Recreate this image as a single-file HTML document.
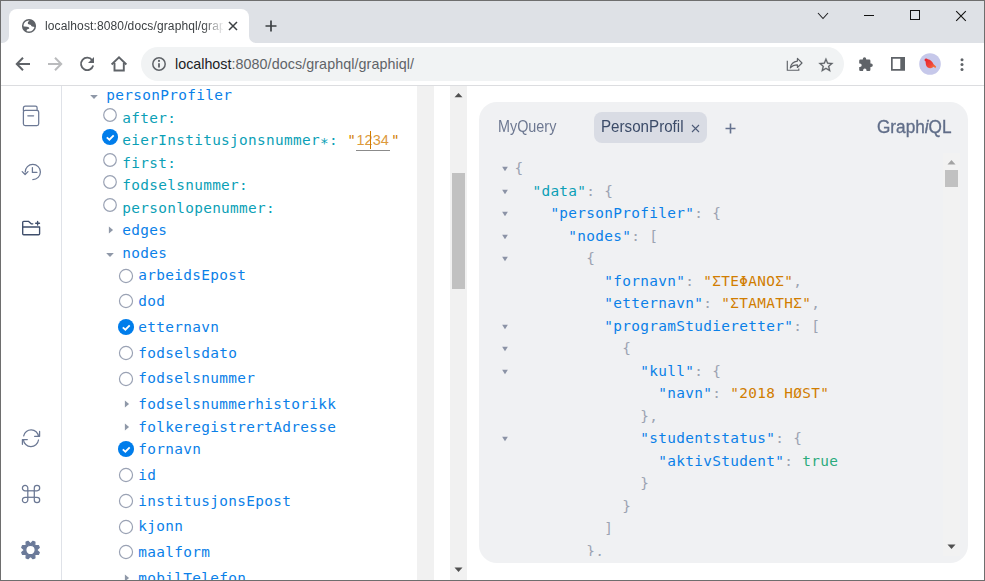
<!DOCTYPE html><html><head><meta charset="utf-8"><title>GraphiQL</title><style>
html,body{margin:0;padding:0;}
body{width:985px;height:581px;overflow:hidden;background:#fff;position:relative;font-family:'Liberation Sans',sans-serif;}
.abs{position:absolute;}
#win{position:absolute;left:0;top:0;width:983px;height:579px;border:1px solid #6e6e6e;overflow:hidden;background:#fff;}
#strip{position:absolute;left:0;top:0;width:983px;height:42px;background:#dee1e6;}
#tab{position:absolute;left:8px;top:8px;width:240px;height:34px;background:#fff;border-radius:8px 8px 0 0;}
#toolbar{position:absolute;left:0;top:42px;width:983px;height:42px;background:#fff;border-bottom:1px solid #dcdde0;}
#omni{position:absolute;left:140px;top:4px;width:703px;height:34px;border-radius:17px;background:#f1f3f4;}
#page{position:absolute;left:0;top:85px;width:983px;height:494px;background:#fff;overflow:hidden;}
.m{font-family:'DejaVu Sans Mono','Liberation Mono',monospace;font-size:14.4px;letter-spacing:0.33px;white-space:pre;line-height:20px;position:absolute;}
.b{color:#0a80e8;}
.t{color:#0b9fb6;}
.o{color:#d17d00;}
.g{color:#2bab7c;}
.p{color:#9ca3b2;}
</style></head><body><div id="win"><div id="strip">
<div id="tab"></div>
<svg class="abs" style="left:1px;top:35px" width="7" height="7" viewBox="0 0 7 7"><path d="M7 0V7H0A7 7 0 0 0 7 0Z" fill="#fff"/></svg>
<svg class="abs" style="left:248px;top:35px" width="7" height="7" viewBox="0 0 7 7"><path d="M0 0V7H7A7 7 0 0 1 0 0Z" fill="#fff"/></svg>
<svg class="abs" style="left:20px;top:17px" width="16" height="16" viewBox="-8 -8 16 16"><defs><clipPath id="gc"><circle cx="0" cy="0" r="6.400"/></clipPath></defs><circle cx="0" cy="0" r="6.300" fill="#fff" stroke="#5f6368" stroke-width="1.5"/><g clip-path="url(#gc)" fill="#5f6368"><path d="M1.700 -7L-0.900 -3.900C-1.500 -3 -1.200 -1.900 -0.400 -1.700L1.300 -1.300C2.200 -1.100 2.300 0.300 3.200 0.600L7 1.200V-7Z"/><path d="M-7 0.300L-1.800 0.800C-0.800 0.900 0.400 1.700 0.300 2.500C0.200 3.200 -1.500 2.900 -2 3.600C-2.500 4.300 -2.300 5.400 -2.700 7H-7Z"/></g></svg>
<div class="abs" id="tabtitle" style="left:44px;top:17px;width:178px;height:18px;overflow:hidden;white-space:nowrap;font-size:12px;letter-spacing:0.125px;line-height:16px;color:#3c4043;-webkit-mask-image:linear-gradient(90deg,#000 158px,transparent 180px);mask-image:linear-gradient(90deg,#000 158px,transparent 180px)">localhost:8080/docs/graphql/graphiql/</div>
<svg class="abs" style="left:227px;top:20px" width="10" height="10" viewBox="0 0 10 10"><path d="M1 1L9 9M9 1L1 9" stroke="#3c4043" stroke-width="1.5" fill="none"/></svg>
<svg class="abs" style="left:264px;top:19px" width="12" height="12" viewBox="0 0 12 12"><path d="M6 0.500V11.500M0.500 6H11.500" stroke="#3c4043" stroke-width="1.7" fill="none"/></svg>
<svg class="abs" style="left:816px;top:9.500px" width="12" height="10" viewBox="0 0 12 10"><path d="M1 2L6 7.500L11 2" stroke="#202124" stroke-width="1.1" fill="none"/></svg>
<div class="abs" style="left:863px;top:14px;width:10px;height:1px;background:#111"></div>
<div class="abs" style="left:909px;top:9px;width:8px;height:8px;border:1px solid #111;box-sizing:content-box"></div>
<svg class="abs" style="left:954px;top:8.500px" width="12" height="12" viewBox="0 0 12 12"><path d="M1.200 1.200L10.800 10.800M10.800 1.200L1.200 10.800" stroke="#111" stroke-width="1.1" fill="none"/></svg>
</div>
<div id="toolbar">
<svg class="abs" style="left:14px;top:13px" width="16" height="16" viewBox="0 0 16 16"><path d="M15 8H2.500M8 1.800L1.800 8L8 14.200" stroke="#5f6368" stroke-width="2" fill="none"/></svg>
<svg class="abs" style="left:46px;top:13px" width="16" height="16" viewBox="0 0 16 16"><path d="M1 8H13.500M8 1.800L14.200 8L8 14.200" stroke="#babbbd" stroke-width="2" fill="none"/></svg>
<svg class="abs" style="left:78px;top:13px" width="16" height="16" viewBox="0 0 16 16"><path d="M13.200 4.200A6.200 6.200 0 1 0 14.200 9.500" stroke="#5f6368" stroke-width="1.8" fill="none"/><path d="M15 1V7H9Z" fill="#5f6368"/></svg>
<svg class="abs" style="left:109px;top:11px" width="20" height="20" viewBox="110 54 20 20"><path d="M111.600 64.500L119 57.400L126.400 64.500" stroke="#5f6368" stroke-width="1.9" fill="none" stroke-linejoin="miter"/><path d="M114.500 63V70.500H123.800V63" stroke="#5f6368" stroke-width="1.9" fill="none"/></svg>
<div id="omni">
<svg class="abs" style="left:10px;top:9px" width="16" height="16" viewBox="0 0 16 16"><circle cx="8" cy="8" r="6.200" stroke="#5f6368" stroke-width="1.5" fill="none"/><path d="M8 7.200V11.400" stroke="#5f6368" stroke-width="1.8"/><circle cx="8" cy="4.900" r="1.050" fill="#5f6368"/></svg>
<div class="abs" id="url" style="left:34px;top:8px;font-size:14.3px;line-height:18px;white-space:nowrap;color:#5f6368"><span style="color:#202124">localhost</span><span style="letter-spacing:0.08px">:8080/docs/graphql/graphiql/</span></div>
<svg class="abs" style="left:644px;top:8px" width="20" height="18" viewBox="785 55 20 18" fill="none" stroke="#5f6368" stroke-width="1.150"><path d="M787.300 60.700V70.200H798.800V68.400"/><path stroke-linejoin="round" d="M797.400 58.400L802 63L797.400 67.500V64.800C794.300 64.800 792 65.700 790.300 68C790.900 64 793.300 61.600 797.400 61.100Z"/></svg>
<svg class="abs" style="left:675px;top:7px" width="22" height="22" viewBox="816 54 22 22"><path transform="translate(817.070 56.250) scale(0.740)" stroke="#5f6368" stroke-width="0.300" d="M22 9.240l-7.190-.620L12 2 9.190 8.630 2 9.240l5.460 4.730L5.820 21 12 17.270 18.180 21l-1.630-7.030L22 9.240zM12 15.400l-3.760 2.270 1-4.280-3.320-2.880 4.380-.380L12 6.100l1.710 4.040 4.380.380-3.320 2.880 1 4.280L12 15.400z" fill="#5f6368"/></svg>
</div>
<svg class="abs" style="left:857px;top:12.600px" width="16" height="16" viewBox="0 0 16 16"><path d="M6.500 1.200a1.700 1.700 0 0 1 1.700 1.700v.6h3a1.200 1.200 0 0 1 1.200 1.200v2.700h.6a1.800 1.800 0 0 1 0 3.600h-.6v2.800a1.200 1.200 0 0 1-1.200 1.200H8.500v-.7a1.700 1.700 0 0 0-3.400 0v.7H2.400a1.200 1.200 0 0 1-1.200-1.200v-2.700h.7a1.800 1.800 0 0 0 0-3.600h-.7V4.700a1.200 1.200 0 0 1 1.200-1.200h2.400v-.6a1.700 1.700 0 0 1 1.700-1.700z" fill="#5f6368"/></svg>
<svg class="abs" style="left:888px;top:12px" width="20" height="18" viewBox="889 55 20 18"><path fill-rule="evenodd" fill="#5f6368" d="M891 57H905V70.800H891ZM892.700 58.700V69.100H900.300V58.700Z"/></svg>
<svg class="abs" style="left:918px;top:10px" width="22" height="22" viewBox="0 0 22 22"><defs><linearGradient id="bg1" x1="0" y1="0" x2="1" y2="1"><stop offset="0" stop-color="#e5202c"/><stop offset="0.600" stop-color="#f0443a"/><stop offset="1" stop-color="#f6883e"/></linearGradient></defs><circle cx="11" cy="11" r="10.800" fill="#c6c8ea"/><path d="M5.400 7.300C5.600 5.600 7.600 5 8.800 6.200C11.400 6.600 13.600 8.600 14.600 11.200L17.200 13.400L16.400 15.200L14.600 13.800C13.400 15.400 10.400 15.800 8.400 14.200C6.600 12.800 6.800 10.400 6.600 8.600Z" fill="url(#bg1)"/></svg>
<svg class="abs" style="left:958px;top:13px" width="6" height="18" viewBox="0 0 6 18"><circle cx="3" cy="3.700" r="1.500" fill="#5f6368"/><circle cx="3" cy="8.600" r="1.500" fill="#5f6368"/><circle cx="3" cy="13.500" r="1.500" fill="#5f6368"/></svg>
</div>
<div id="page">
<div class="abs" style="left:60px;top:0;width:1px;height:494px;background:#dfe2e8"></div>
<svg class="abs" style="left:18px;top:16px" width="24" height="28" viewBox="19 102 24 28" fill="none" stroke="#6b7894" stroke-width="1.25" stroke-linecap="round" stroke-linejoin="round"><path d="M23.400 110.800V108.200A2 2 0 0 1 25.400 106.200H35.500A1.600 1.600 0 0 1 37.100 107.800V110.600"/><rect x="23.400" y="110.300" width="15.300" height="15.200" rx="1.800"/><path d="M27.800 115.800H33.600"/></svg>
<svg class="abs" style="left:18px;top:72px" width="24" height="28" viewBox="19 158 24 28" fill="none" stroke="#6b7894" stroke-width="1.25" stroke-linecap="round" stroke-linejoin="round"><path d="M25.200 172A7.600 7.600 0 1 1 32.800 179.600"/><path d="M22.200 171.600L25.100 174.500L28 171.600"/><path d="M32.400 167.600V172.400H36.900"/></svg>
<svg class="abs" style="left:18px;top:128px" width="24" height="28" viewBox="19 214 24 28" fill="none" stroke="#3f4e6b" stroke-width="1.35" stroke-linecap="round" stroke-linejoin="round"><path d="M22.700 227V222.300A1 1 0 0 1 23.700 221.300H28.400L31.200 223.800H32.800"/><path d="M22.700 227H39.600V233.700A1 1 0 0 1 38.600 234.700H23.700A1 1 0 0 1 22.700 233.700Z"/><path d="M37.600 221.300V225.100M35.700 223.200H39.500"/></svg>
<svg class="abs" style="left:18px;top:338px" width="24" height="28" viewBox="19 424 24 28" fill="none" stroke="#6b7894" stroke-width="1.25" stroke-linecap="round" stroke-linejoin="round"><path d="M23.700 435.800A7.500 7.500 0 0 1 38.500 436.400"/><path d="M34.600 436.300H39.600V431.400"/><path d="M38.500 440A7.600 7.600 0 0 1 23.400 439.600"/><path d="M27.300 439.500H22.400V444.300"/></svg>
<svg class="abs" style="left:18px;top:394px" width="24" height="28" viewBox="19 480 24 28" fill="none" stroke="#6b7894" stroke-width="1.25"><rect x="27.800" y="490.800" width="6.500" height="6.500"/><path d="M27.800 490.800H25.200A2.700 2.700 0 1 1 27.800 488.100ZM34.300 490.800V488.100A2.700 2.700 0 1 1 37 490.800ZM34.300 497.300H37A2.700 2.700 0 1 1 34.300 500ZM27.800 497.300V500A2.700 2.700 0 1 1 25.200 497.300Z"/></svg>
<svg class="abs" style="left:18px;top:450px" width="24" height="28" viewBox="19 536 24 28"><path fill-rule="evenodd" fill="#6b7a99" stroke="#6b7a99" stroke-width="1.2" stroke-linejoin="round" d="M32.97 541.24L34.95 542.06L34.81 545.41L35.09 545.69L38.44 545.55L39.26 547.53L36.80 549.80L36.80 550.20L39.26 552.47L38.44 554.45L35.09 554.31L34.81 554.59L34.95 557.94L32.97 558.76L30.70 556.30L30.30 556.30L28.03 558.76L26.05 557.94L26.19 554.59L25.91 554.31L22.56 554.45L21.74 552.47L24.20 550.20L24.20 549.80L21.74 547.53L22.56 545.55L25.91 545.69L26.19 545.41L26.05 542.06L28.03 541.24L30.30 543.70L30.70 543.70ZM25.80 550.00a4.7 4.7 0 1 0 9.4 0a4.7 4.7 0 1 0 -9.4 0Z"/></svg>
<svg class="abs" style="left:88.10px;top:7.80px" width="10" height="6" viewBox="0 0 10 6"><path d="M1.200 1H8.800L5 5.100Z" fill="#8f98a8"/></svg>
<div class="m b" style="left:105.30px;top:-1.00px">personProfiler</div>
<svg class="abs" style="left:100.06px;top:20.10px" width="18" height="18" viewBox="0 0 18 18"><circle cx="9" cy="9" r="6.3" fill="#fff" stroke="#9aa2b4" stroke-width="1.2"/></svg>
<div class="m t" style="left:121.20px;top:22.00px">after:</div>
<svg class="abs" style="left:100.06px;top:41.90px" width="18" height="18" viewBox="0 0 18 18"><circle cx="9" cy="9" r="8.050" fill="#007deb"/><path d="M5.800 9.300L8.400 11.700L12.700 7.400" stroke="#fff" stroke-width="1.8" fill="none"/></svg>
<div class="m t" style="left:121.20px;top:44.00px">eierInstitusjonsnummer<span style="position:relative;top:2.500px">*</span>: </div>
<svg class="abs" style="left:100.06px;top:65.10px" width="18" height="18" viewBox="0 0 18 18"><circle cx="9" cy="9" r="6.3" fill="#fff" stroke="#9aa2b4" stroke-width="1.2"/></svg>
<div class="m t" style="left:121.20px;top:67.00px">first:</div>
<svg class="abs" style="left:100.06px;top:87.10px" width="18" height="18" viewBox="0 0 18 18"><circle cx="9" cy="9" r="6.3" fill="#fff" stroke="#9aa2b4" stroke-width="1.2"/></svg>
<div class="m t" style="left:121.20px;top:89.00px">fodselsnummer:</div>
<svg class="abs" style="left:100.06px;top:110.10px" width="18" height="18" viewBox="0 0 18 18"><circle cx="9" cy="9" r="6.3" fill="#fff" stroke="#9aa2b4" stroke-width="1.2"/></svg>
<div class="m t" style="left:121.20px;top:112.00px">personlopenummer:</div>
<div class="m o" style="left:346.20px;top:44.00px">"</div>
<div class="abs" style="left:355px;top:64px;width:34px;height:1px;background:#8b8b8b"></div>
<div class="abs" id="val" style="left:355.5px;top:45px;font-family:'Liberation Sans',sans-serif;font-size:14.500px;line-height:18px;color:#dd9a3c;letter-spacing:0px">1234</div>
<div class="abs" style="left:369px;top:45px;width:1px;height:18px;background:#d17d00"></div>
<div class="m o" style="left:390.00px;top:44.00px">"</div>
<svg class="abs" style="left:107.00px;top:138.60px" width="6" height="10" viewBox="0 0 6 10"><path d="M0.900 1.500V8.500L5.100 5Z" fill="#8f98a8"/></svg>
<div class="m b" style="left:121.20px;top:134.00px">edges</div>
<svg class="abs" style="left:104.00px;top:165.80px" width="10" height="6" viewBox="0 0 10 6"><path d="M1.200 1H8.800L5 5.100Z" fill="#8f98a8"/></svg>
<div class="m b" style="left:121.20px;top:157.00px">nodes</div>
<svg class="abs" style="left:116.00px;top:180.90px" width="18" height="18" viewBox="0 0 18 18"><circle cx="9" cy="9" r="6.55" fill="#fff" stroke="#9aa2b4" stroke-width="1.2"/></svg>
<div class="m b" style="left:137.30px;top:179.00px">arbeidsEpost</div>
<svg class="abs" style="left:116.00px;top:206.30px" width="18" height="18" viewBox="0 0 18 18"><circle cx="9" cy="9" r="6.55" fill="#fff" stroke="#9aa2b4" stroke-width="1.2"/></svg>
<div class="m b" style="left:137.30px;top:205.00px">dod</div>
<svg class="abs" style="left:115.90px;top:231.90px" width="18" height="18" viewBox="0 0 18 18"><circle cx="9" cy="9" r="8.050" fill="#007deb"/><path d="M5.800 9.300L8.400 11.700L12.700 7.400" stroke="#fff" stroke-width="1.8" fill="none"/></svg>
<div class="m b" style="left:137.30px;top:231.00px">etternavn</div>
<svg class="abs" style="left:116.00px;top:258.00px" width="18" height="18" viewBox="0 0 18 18"><circle cx="9" cy="9" r="6.55" fill="#fff" stroke="#9aa2b4" stroke-width="1.2"/></svg>
<div class="m b" style="left:137.30px;top:257.00px">fodselsdato</div>
<svg class="abs" style="left:116.00px;top:283.80px" width="18" height="18" viewBox="0 0 18 18"><circle cx="9" cy="9" r="6.55" fill="#fff" stroke="#9aa2b4" stroke-width="1.2"/></svg>
<div class="m b" style="left:137.30px;top:282.00px">fodselsnummer</div>
<svg class="abs" style="left:123.00px;top:312.60px" width="6" height="10" viewBox="0 0 6 10"><path d="M0.900 1.500V8.500L5.100 5Z" fill="#8f98a8"/></svg>
<div class="m b" style="left:137.30px;top:308.00px">fodselsnummerhistorikk</div>
<svg class="abs" style="left:123.00px;top:335.70px" width="6" height="10" viewBox="0 0 6 10"><path d="M0.900 1.500V8.500L5.100 5Z" fill="#8f98a8"/></svg>
<div class="m b" style="left:137.30px;top:331.00px">folkeregistrertAdresse</div>
<svg class="abs" style="left:115.90px;top:353.90px" width="18" height="18" viewBox="0 0 18 18"><circle cx="9" cy="9" r="8.050" fill="#007deb"/><path d="M5.800 9.300L8.400 11.700L12.700 7.400" stroke="#fff" stroke-width="1.8" fill="none"/></svg>
<div class="m b" style="left:137.30px;top:353.00px">fornavn</div>
<svg class="abs" style="left:116.00px;top:380.00px" width="18" height="18" viewBox="0 0 18 18"><circle cx="9" cy="9" r="6.55" fill="#fff" stroke="#9aa2b4" stroke-width="1.2"/></svg>
<div class="m b" style="left:137.30px;top:379.00px">id</div>
<svg class="abs" style="left:116.00px;top:406.00px" width="18" height="18" viewBox="0 0 18 18"><circle cx="9" cy="9" r="6.55" fill="#fff" stroke="#9aa2b4" stroke-width="1.2"/></svg>
<div class="m b" style="left:137.30px;top:405.00px">institusjonsEpost</div>
<svg class="abs" style="left:116.00px;top:431.90px" width="18" height="18" viewBox="0 0 18 18"><circle cx="9" cy="9" r="6.55" fill="#fff" stroke="#9aa2b4" stroke-width="1.2"/></svg>
<div class="m b" style="left:137.30px;top:430.00px">kjonn</div>
<svg class="abs" style="left:116.00px;top:457.00px" width="18" height="18" viewBox="0 0 18 18"><circle cx="9" cy="9" r="6.55" fill="#fff" stroke="#9aa2b4" stroke-width="1.2"/></svg>
<div class="m b" style="left:137.30px;top:456.00px">maalform</div>
<svg class="abs" style="left:123.00px;top:487.00px" width="6" height="10" viewBox="0 0 6 10"><path d="M0.900 1.500V8.500L5.100 5Z" fill="#8f98a8"/></svg>
<div class="m b" style="left:137.30px;top:482.00px">mobilTelefon</div>
<div class="abs" style="left:416px;top:0;width:17px;height:494px;background:#f1f1f1"></div>
<div class="abs" style="left:449px;top:0;width:17px;height:494px;background:#f1f1f1"></div>
<div class="abs" style="left:451px;top:87px;width:13px;height:116px;background:#c1c1c1"></div>
<svg class="abs" style="left:453px;top:6px" width="9" height="6" viewBox="0 0 9 6"><path d="M0.500 5.200L4.500 1L8.500 5.200Z" fill="#505050"/></svg>
<svg class="abs" style="left:453px;top:481px" width="9" height="6" viewBox="0 0 9 6"><path d="M0.500 0.500L4.500 5L8.500 0.500Z" fill="#505050"/></svg>
<div class="abs" id="panel" style="left:478px;top:16px;width:489px;height:461px;background:#f0f1f3;border-radius:18px;overflow:hidden">
<div class="abs" style="left:19.399999999999977px;top:14.599999999999994px;font-size:15.600px;line-height:20px;color:#6d7891;white-space:nowrap;transform:scaleX(0.922);transform-origin:0 0" id="myq">MyQuery</div>
<div class="abs" style="left:115px;top:10px;width:113px;height:31px;border-radius:8px;background:#d9dce4"></div>
<div class="abs" style="left:121.89999999999998px;top:14.599999999999994px;font-size:15.600px;line-height:20px;color:#3b4b68;white-space:nowrap;transform:scaleX(0.972);transform-origin:0 0" id="pp">PersonProfil</div>
<svg class="abs" style="left:211.5px;top:21.599999999999994px" width="9" height="9" viewBox="0 0 9 9"><path d="M1 1L8 8M8 1L1 8" stroke="#4d5b77" stroke-width="1.1" fill="none"/></svg>
<svg class="abs" style="left:246.39999999999998px;top:20.900000000000006px" width="11" height="11" viewBox="0 0 11 11"><path d="M5.500 0.500V10.500M0.500 5.500H10.500" stroke="#65728e" stroke-width="1.6" fill="none"/></svg>
<div class="abs" id="logo" style="left:397.79999999999995px;top:14.400000000000006px;font-size:18.300px;line-height:22px;color:#616e89;-webkit-text-stroke:0.350px #616e89;white-space:nowrap;transform:scaleX(0.940);transform-origin:0 0">Graph<i>i</i>QL</div>
<div class="abs" style="left:464px;top:51px;width:17px;height:403px;background:#f2f2f2"></div>
<div class="abs" style="left:466px;top:68px;width:13px;height:17px;background:#c1c1c1"></div>
<svg class="abs" style="left:468px;top:57px" width="9" height="6" viewBox="0 0 9 6"><path d="M0.500 5.500L4.500 1L8.500 5.500Z" fill="#a3a3a3"/></svg>
<svg class="abs" style="left:468px;top:442px" width="9" height="6" viewBox="0 0 9 6"><path d="M0.500 0.500L4.500 5L8.500 0.500Z" fill="#505050"/></svg>
<div class="abs" style="left:0;top:53px;width:464px;height:401px;overflow:hidden">
<div class="m" style="left:35.40px;top:3.00px"><span class="p">{</span></div>
<svg class="abs" style="left:21.65px;top:11.40px" width="8" height="6" viewBox="0 0 8 6"><path d="M1.150 0.700H6.850L4 5.300Z" fill="#8b93a6"/></svg>
<div class="m" style="left:35.40px;top:26.00px">  <span class="t">"data"</span><span class="p">: {</span></div>
<svg class="abs" style="left:21.65px;top:34.40px" width="8" height="6" viewBox="0 0 8 6"><path d="M1.150 0.700H6.850L4 5.300Z" fill="#8b93a6"/></svg>
<div class="m" style="left:35.40px;top:48.00px">    <span class="b">"personProfiler"</span><span class="p">: {</span></div>
<svg class="abs" style="left:21.65px;top:56.40px" width="8" height="6" viewBox="0 0 8 6"><path d="M1.150 0.700H6.850L4 5.300Z" fill="#8b93a6"/></svg>
<div class="m" style="left:35.40px;top:71.00px">      <span class="b">"nodes"</span><span class="p">: [</span></div>
<svg class="abs" style="left:21.65px;top:79.40px" width="8" height="6" viewBox="0 0 8 6"><path d="M1.150 0.700H6.850L4 5.300Z" fill="#8b93a6"/></svg>
<div class="m" style="left:35.40px;top:93.00px">        <span class="p">{</span></div>
<svg class="abs" style="left:21.65px;top:101.40px" width="8" height="6" viewBox="0 0 8 6"><path d="M1.150 0.700H6.850L4 5.300Z" fill="#8b93a6"/></svg>
<div class="m" style="left:35.40px;top:116.00px">          <span class="b">"fornavn"</span><span class="p">: </span><span class="o">"ΣΤΕΦΑΝΟΣ"</span><span class="p">,</span></div>
<div class="m" style="left:35.40px;top:138.00px">          <span class="b">"etternavn"</span><span class="p">: </span><span class="o">"ΣΤΑΜΑΤΗΣ"</span><span class="p">,</span></div>
<div class="m" style="left:35.40px;top:161.00px">          <span class="b">"programStudieretter"</span><span class="p">: [</span></div>
<svg class="abs" style="left:21.65px;top:169.40px" width="8" height="6" viewBox="0 0 8 6"><path d="M1.150 0.700H6.850L4 5.300Z" fill="#8b93a6"/></svg>
<div class="m" style="left:35.40px;top:183.00px">            <span class="p">{</span></div>
<svg class="abs" style="left:21.65px;top:191.40px" width="8" height="6" viewBox="0 0 8 6"><path d="M1.150 0.700H6.850L4 5.300Z" fill="#8b93a6"/></svg>
<div class="m" style="left:35.40px;top:206.00px">              <span class="b">"kull"</span><span class="p">: {</span></div>
<svg class="abs" style="left:21.65px;top:214.40px" width="8" height="6" viewBox="0 0 8 6"><path d="M1.150 0.700H6.850L4 5.300Z" fill="#8b93a6"/></svg>
<div class="m" style="left:35.40px;top:228.00px">                <span class="b">"navn"</span><span class="p">: </span><span class="o">"2018 HØST"</span></div>
<div class="m" style="left:35.40px;top:251.00px">              <span class="p">},</span></div>
<div class="m" style="left:35.40px;top:273.00px">              <span class="b">"studentstatus"</span><span class="p">: {</span></div>
<svg class="abs" style="left:21.65px;top:281.40px" width="8" height="6" viewBox="0 0 8 6"><path d="M1.150 0.700H6.850L4 5.300Z" fill="#8b93a6"/></svg>
<div class="m" style="left:35.40px;top:296.00px">                <span class="b">"aktivStudent"</span><span class="p">: </span><span class="g">true</span></div>
<div class="m" style="left:35.40px;top:318.00px">              <span class="p">}</span></div>
<div class="m" style="left:35.40px;top:341.00px">            <span class="p">}</span></div>
<div class="m" style="left:35.40px;top:363.00px">          <span class="p">]</span></div>
<div class="m" style="left:35.40px;top:386.00px">        <span class="p">},</span></div>
</div>
</div>
</div></div></body></html>
